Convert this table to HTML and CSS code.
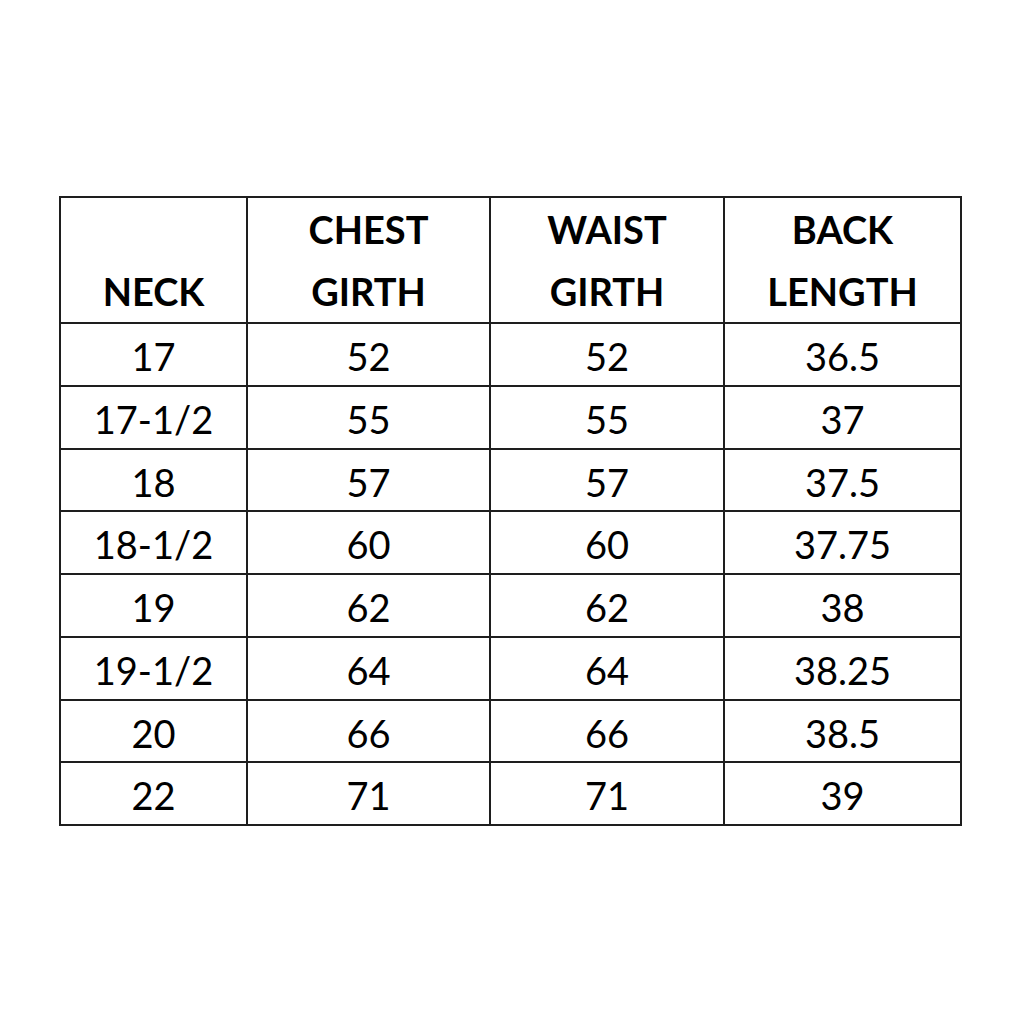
FILE: index.html
```html
<!DOCTYPE html>
<html>
<head>
<meta charset="utf-8">
<link rel="stylesheet" href="styles.css">
</head>
<body>
<table class="size-table">
  <colgroup>
    <col class="c1"><col class="c2"><col class="c3"><col class="c4">
  </colgroup>
  <thead>
    <tr>
      <th>NECK</th>
      <th>CHEST<br>GIRTH</th>
      <th>WAIST<br>GIRTH</th>
      <th>BACK<br>LENGTH</th>
    </tr>
  </thead>
  <tbody>
    <tr><td>17</td><td>52</td><td>52</td><td>36.5</td></tr>
    <tr><td>17-1/2</td><td>55</td><td>55</td><td>37</td></tr>
    <tr><td>18</td><td>57</td><td>57</td><td>37.5</td></tr>
    <tr><td>18-1/2</td><td>60</td><td>60</td><td>37.75</td></tr>
    <tr><td>19</td><td>62</td><td>62</td><td>38</td></tr>
    <tr><td>19-1/2</td><td>64</td><td>64</td><td>38.25</td></tr>
    <tr><td>20</td><td>66</td><td>66</td><td>38.5</td></tr>
    <tr><td>22</td><td>71</td><td>71</td><td>39</td></tr>
  </tbody>
</table>
</body>
</html>
```

FILE: styles.css
```css
html, body {
  margin: 0;
  padding: 0;
  background: #ffffff;
}

body {
  padding: 196px 0 0 59px;
  font-family: "Lato", "Liberation Sans", sans-serif;
  color: #000;
}

.size-table {
  border-collapse: collapse;
  table-layout: fixed;
  width: 901px;
}

.c1 { width: 187px; }
.c2 { width: 243px; }
.c3 { width: 234px; }
.c4 { width: 237px; }

.size-table th,
.size-table td {
  border: 2px solid #1e1e1e;
  padding: 0;
  text-align: center;
  font-size: 38px;
}

.size-table th {
  font-weight: 700;
  height: 123px;
  line-height: 62px;
  vertical-align: bottom;
}

.size-table td {
  font-weight: 400;
  line-height: 56.75px;
  padding-top: 4px;
  vertical-align: middle;
}
```
